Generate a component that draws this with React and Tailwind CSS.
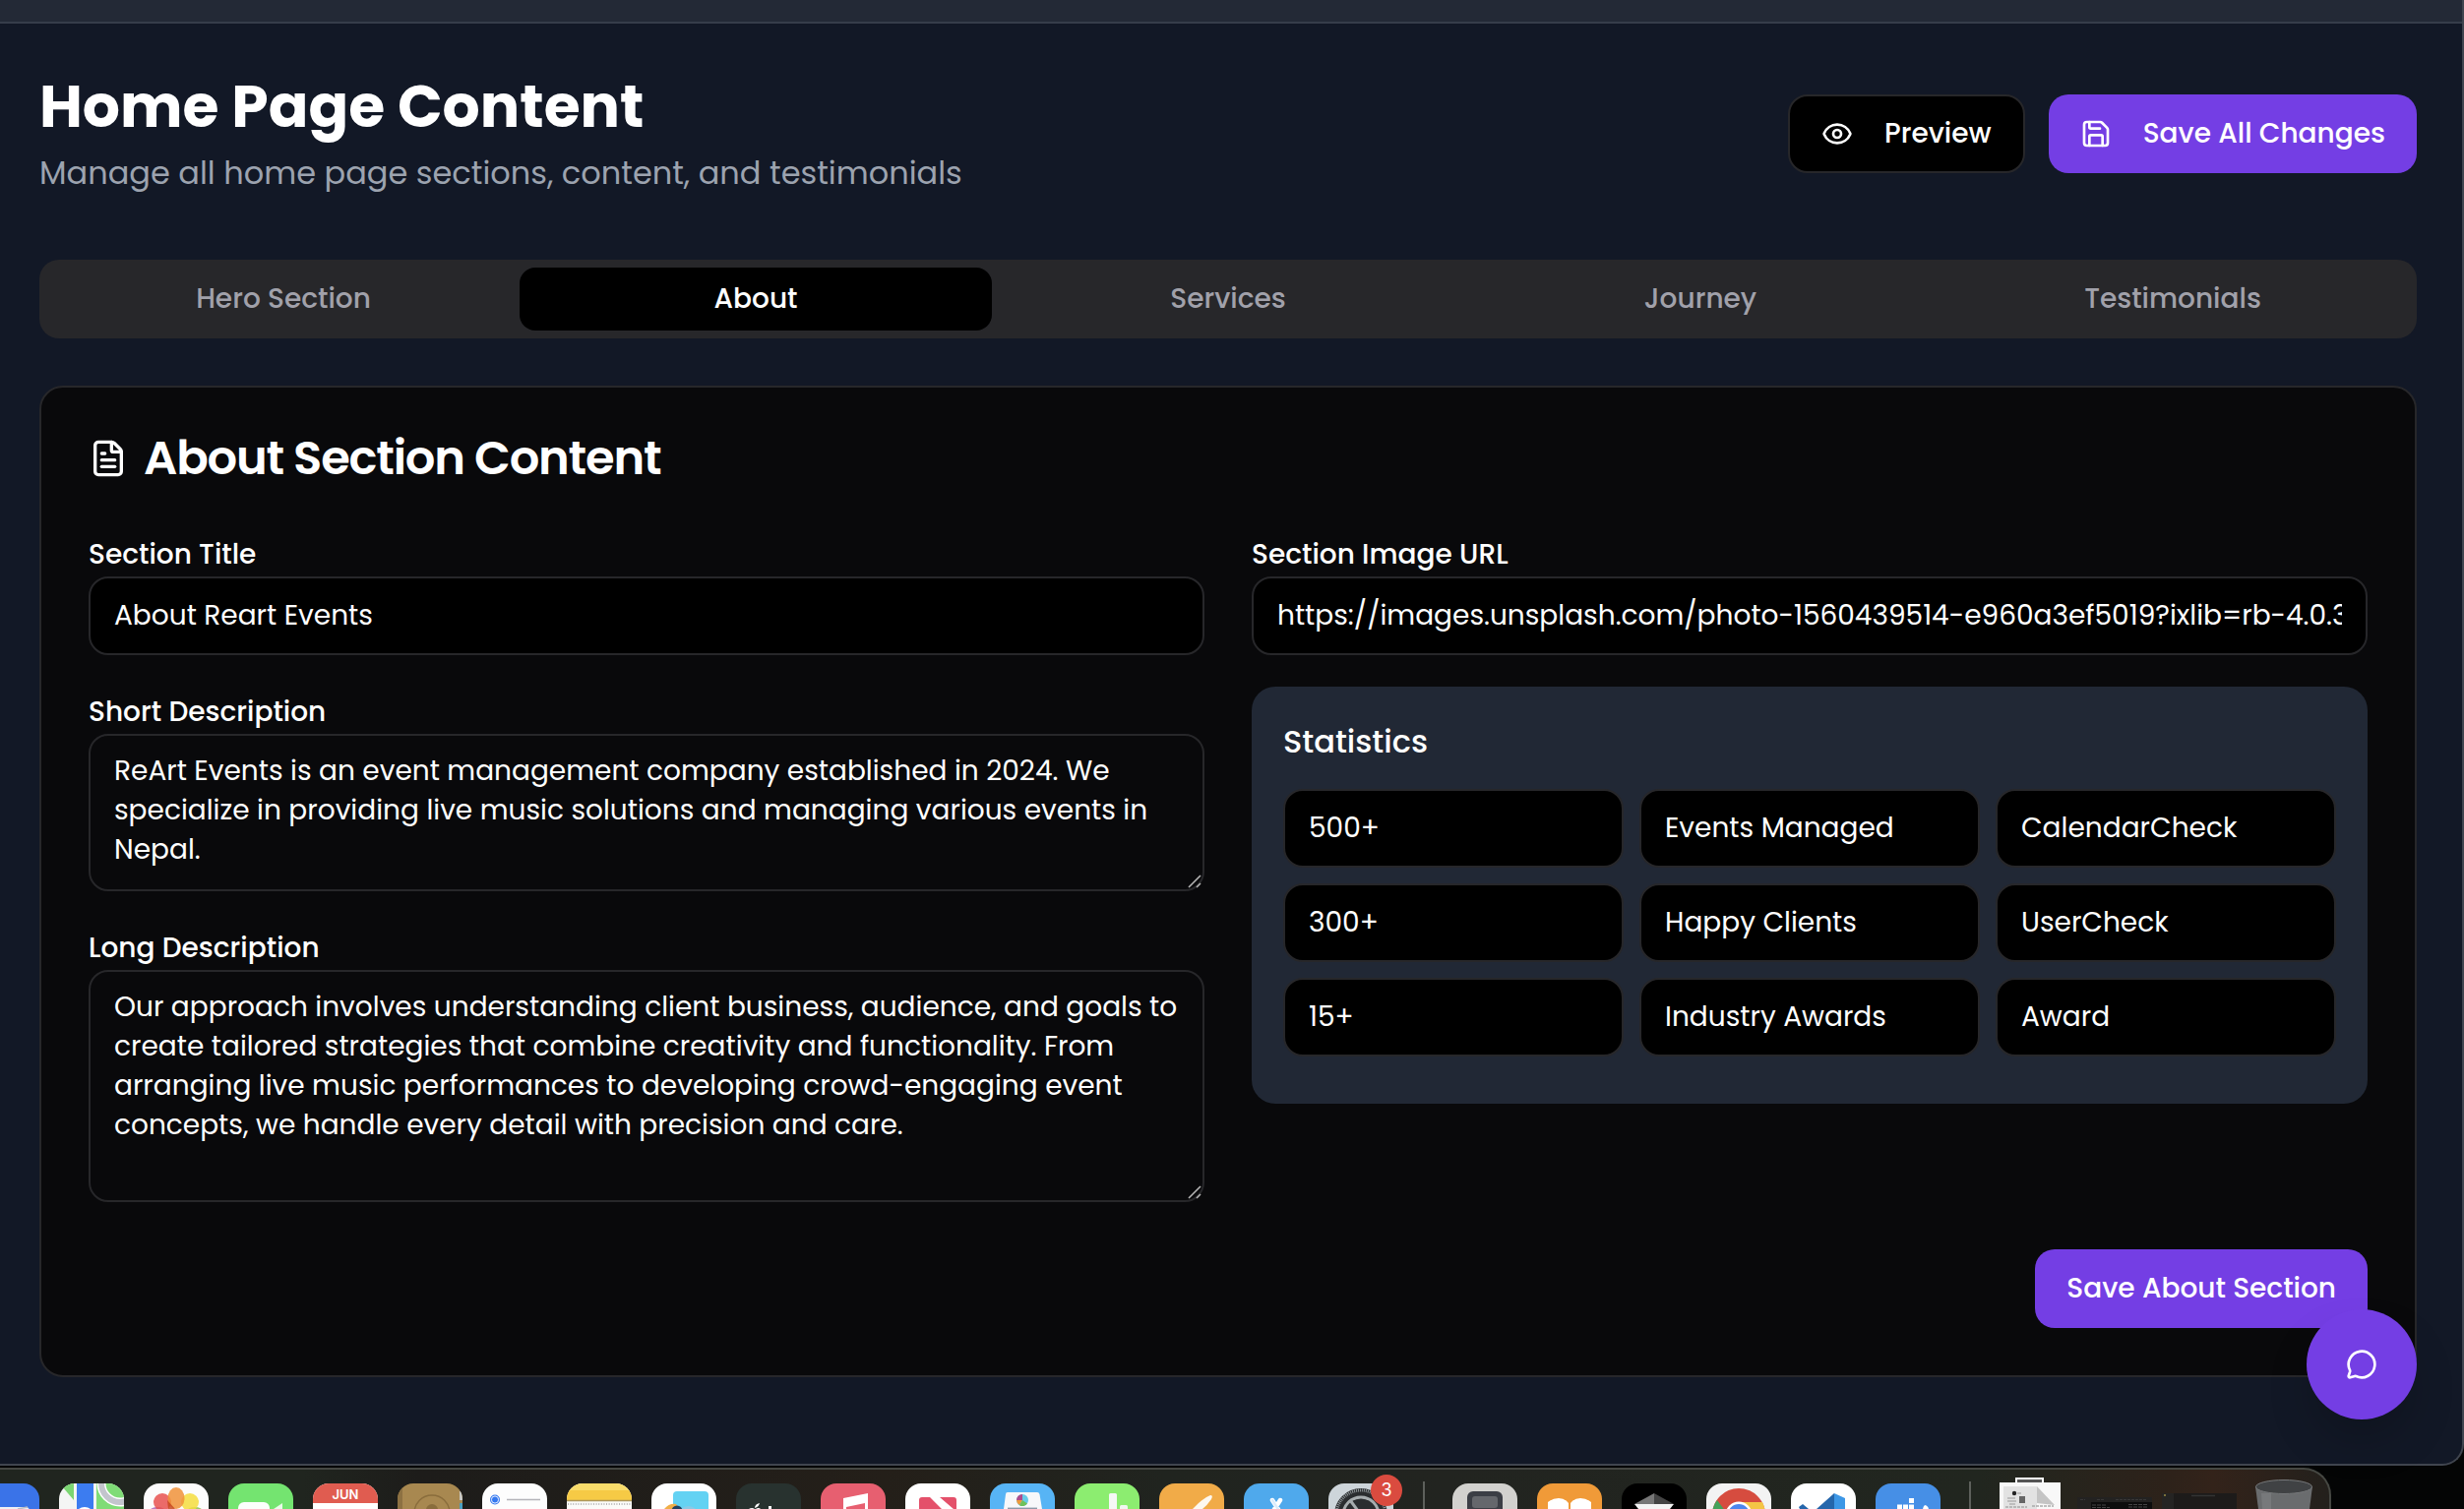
import { Eye, FileText, MessageCircle, Save } from "lucide-react";

const tabs = ["Hero Section", "About", "Services", "Journey", "Testimonials"];

const stats = [
  ["500+", "Events Managed", "CalendarCheck"],
  ["300+", "Happy Clients", "UserCheck"],
  ["15+", "Industry Awards", "Award"],
];

function Field({ label, children }) {
  return (
    <div>
      <div className="h-[48px] text-[28px] leading-[52px] font-medium">{label}</div>
      {children}
    </div>
  );
}

function TextInput({ children }) {
  return (
    <div className="flex h-20 items-center rounded-[20px] border-2 border-[#27272a] bg-black px-6 text-[28px] leading-[40px]">
      <span className="min-w-0 flex-1 overflow-hidden whitespace-nowrap">{children}</span>
    </div>
  );
}

function TextArea({ children, size }) {
  return (
    <div className={`relative rounded-[20px] border-2 border-[#27272a] px-6 py-4 text-[28px] leading-[40px] ${size}`}>
      {children}
      <svg className="absolute right-0 bottom-0 size-4" viewBox="0 0 16 16" stroke="#b4b4b4" strokeWidth="1.6">
        <path d="M2 14 14 2M10 14l4-4" />
      </svg>
    </div>
  );
}

function Header() {
  return (
    <header className="flex items-center justify-between">
      <div>
        <h1 className="text-[60px] leading-[72px] font-bold">Home Page Content</h1>
        <p className="mt-2 text-[32px] leading-[48px] text-[#9ca3af]">
          Manage all home page sections, content, and testimonials
        </p>
      </div>
      <div className="flex gap-6">
        <button className="flex h-20 items-center gap-8 rounded-[20px] border-2 border-[#27272a] bg-black px-8 text-[28px] font-medium">
          <Eye size={32} />
          Preview
        </button>
        <button className="flex h-20 items-center gap-8 rounded-[20px] bg-[#743ee4] px-8 text-[28px] font-medium">
          <Save size={32} />
          Save All Changes
        </button>
      </div>
    </header>
  );
}

function Tabs() {
  return (
    <nav className="mt-16 grid h-20 grid-cols-5 rounded-[20px] bg-[#27272a] p-2 text-[28px] font-medium text-[#a1a1aa]">
      {tabs.map((t) => (
        <div
          key={t}
          className={`flex items-center justify-center rounded-2xl ${t === "About" ? "bg-black text-white" : ""}`}
        >
          {t}
        </div>
      ))}
    </nav>
  );
}

function AboutCard() {
  return (
    <section className="mt-12 rounded-3xl border-2 border-[#27272a] bg-[#09090b] p-12">
      <h2 className="flex h-12 items-center gap-4 text-[48px] leading-[48px] font-semibold tracking-tight">
        <FileText size={40} />
        About Section Content
      </h2>
      <div className="mt-12 grid grid-cols-2 gap-12">
        <div className="flex flex-col gap-8">
          <Field label="Section Title">
            <TextInput>About Reart Events</TextInput>
          </Field>
          <Field label="Short Description">
            <TextArea size="h-[160px]">
              ReArt Events is an event management company established in 2024. We specialize in providing live music
              solutions and managing various events in Nepal.
            </TextArea>
          </Field>
          <Field label="Long Description">
            <TextArea size="h-[236px]">
              Our approach involves understanding client business, audience, and goals to create tailored strategies
              that combine creativity and functionality. From arranging live music performances to developing
              crowd-engaging event concepts, we handle every detail with precision and care.
            </TextArea>
          </Field>
        </div>
        <div className="flex flex-col gap-8">
          <Field label="Section Image URL">
            <TextInput>https://images.unsplash.com/photo-1560439514-e960a3ef5019?ixlib=rb-4.0.3</TextInput>
          </Field>
          <div className="rounded-3xl bg-[#212835] p-8 pb-12">
            <h3 className="text-[32px] leading-[48px] font-medium">Statistics</h3>
            <div className="mt-6 grid grid-cols-3 gap-4">
              {stats.flat().map((s) => (
                <TextInput key={s}>{s}</TextInput>
              ))}
            </div>
          </div>
        </div>
      </div>
      <div className="mt-12 flex justify-end">
        <button className="h-20 rounded-[20px] bg-[#743ee4] px-8 text-[28px] font-medium">Save About Section</button>
      </div>
    </section>
  );
}

function DockIcon({ bg, children }) {
  return (
    <div className={`h-[26px] w-[66px] shrink-0 overflow-hidden rounded-t-2xl ${bg}`}>
      <svg width="66" height="26" viewBox="0 0 66 26">
        {children}
      </svg>
    </div>
  );
}

function Dock() {
  return (
    <div className="mt-[2px] h-[42px] w-[2369px] overflow-hidden rounded-tr-[28px] border-t-2 border-r-2 border-[#454742] bg-[linear-gradient(90deg,#20251f_0%,#20251f_13%,#1d1c1a_18%,#241f19_38%,#20241f_50%,#222420_62%,#21261f_85%,#2d221a_93%,#33231a_95%,#23201c_100%)]">
      <div className="-ml-[26px] flex h-10 items-end gap-5">
        <DockIcon bg="bg-[#3a73e8]">
          <path d="M0 24h52q4 0 4 4H0z" fill="#eef0f4" />
          <path d="M44 26 54 24" stroke="#b9bcc6" strokeWidth="1.5" />
        </DockIcon>
        <DockIcon bg="bg-[#f4f5f4]">
          <path d="M3 3 15 17V0H5z" fill="#7bd672" />
          <path d="M18 0h17v26H18z" fill="#3c7cf0" />
          <path d="M38 0h28v26H38z" fill="#7fdc76" />
          <circle cx="62" cy="0" r="19" fill="none" stroke="#fff" strokeWidth="9" />
          <circle cx="62" cy="0" r="19" fill="none" stroke="#c3c5cd" strokeWidth="6" />
          <circle cx="26" cy="34" r="10" fill="#fff" />
        </DockIcon>
        <DockIcon bg="bg-[#fcfcfc]">
          <g fillOpacity="0.85">
            <ellipse cx="14" cy="28" rx="8" ry="4" fill="#b065b5" />
            <ellipse cx="52" cy="28" rx="8" ry="4" fill="#8fc04c" />
            <ellipse cx="47" cy="19" rx="9" ry="9" fill="#f4dd3e" />
            <ellipse cx="19" cy="19" rx="9" ry="9" fill="#e8514f" />
            <ellipse cx="33" cy="15" rx="8.5" ry="11" fill="#f0923a" />
            <path d="m24 17 8 9h-7z" fill="#c8481f" />
          </g>
        </DockIcon>
        <DockIcon bg="bg-[#74e470]">
          <rect x="10" y="19" width="32" height="20" rx="6" fill="#fbfffb" />
          <path d="m46 26 9-6v8z" fill="#eafbe9" />
        </DockIcon>
        <DockIcon bg="bg-white">
          <path d="M0 0h66v20H0z" fill="#e05c50" />
          <text x="33" y="16" textAnchor="middle" fontFamily="Inter, sans-serif" fontWeight="600" fontSize="13" fill="#fff">
            JUN
          </text>
        </DockIcon>
        <DockIcon bg="bg-[#a88850]">
          <path d="M0 0h5v26H0z" fill="#8d7142" />
          <circle cx="35" cy="30" r="18" fill="none" stroke="#8a6d3c" strokeWidth="1.5" />
          <circle cx="35" cy="27" r="6" fill="#8a6d3c" />
          <path d="M63 8h3v9h-3z" fill="#c8c8c4" />
          <path d="M63 20h3v6h-3z" fill="#4b9fc0" />
        </DockIcon>
        <DockIcon bg="bg-[#fdfdfd]">
          <circle cx="13" cy="16.500" r="5" fill="#3478f0" />
          <circle cx="13" cy="16.500" r="3.600" fill="none" stroke="#fff" strokeWidth="0.900" />
          <path d="M25 16.500h34" stroke="#b5b5ba" strokeWidth="1.500" />
        </DockIcon>
        <DockIcon bg="bg-[#fbfbf9]">
          <path d="M0 0h66v8H0z" fill="#f9dc6a" />
          <path d="M0 7h66v10H0z" fill="#f6ca45" />
          <path d="M0 17.500h66" stroke="#ad985c" strokeWidth="1.500" />
          <path d="M1 21h64" stroke="#b8b8b8" strokeWidth="2" strokeDasharray="1 1.600" />
        </DockIcon>
        <DockIcon bg="bg-white">
          <rect x="22" y="8" width="36" height="26" rx="4" fill="#63d2f3" />
          <path d="M13 26q5-6 12-5l4 5z" fill="#f0ae48" />
          <path d="M30 26q8-6 15 0z" fill="#8ac9e6" />
          <circle cx="26" cy="28" r="5.500" fill="#22405f" />
        </DockIcon>
        <DockIcon bg="bg-[#28322f]">
          <path d="M19 25q0-4 5-5-1 4-5 5z" fill="#fff" />
          <path d="M13 26q3-2 6 0zM20 26q3-2 5 0zM33 23h3v3h-3z" fill="#fff" />
        </DockIcon>
        <DockIcon bg="bg-[#e75f70]">
          <path d="M23 15 48 10v16h-3v-6l-19 4v2h-3z" fill="#fff" />
        </DockIcon>
        <DockIcon bg="bg-white">
          <path d="M14 17q0-3 3-3h8l12 12H14zM35 14h14q3 0 3 3v9h-3z" fill="#e4506a" />
        </DockIcon>
        <DockIcon bg="bg-[#57b4f5]">
          <path d="M18 9h30q2 0 2.500 2L53 26H14l2-15q0-2 2-2z" fill="#f7f8fa" />
          <circle cx="33" cy="17" r="6" fill="#67cbe8" />
          <path d="M33 17v-6a6 6 0 0 0-6 6z" fill="#b04a8c" />
          <path d="M33 17h-6a6 6 0 0 0 3 5z" fill="#ef9a3a" />
          <path d="m33 17-3 5.200a6 6 0 0 0 8-1.800z" fill="#6fc158" />
          <path d="M18 25.300h30" stroke="#8d9aa8" strokeWidth="1.400" />
        </DockIcon>
        <DockIcon bg="bg-[#8ced70]">
          <rect x="35" y="10" width="8" height="20" rx="1.500" fill="#f5f8f5" />
          <rect x="46" y="22" width="8" height="10" rx="1.500" fill="#f0f6f0" />
        </DockIcon>
        <DockIcon bg="bg-[#f1ab48]">
          <path d="M34 26Q44 15 52 12q3 0 1 4-4 6-9 10z" fill="#fdf8f0" />
        </DockIcon>
        <DockIcon bg="bg-[#4fa9ec]">
          <path d="m29 17 9 14M37 17l-9 14" stroke="#fff" strokeWidth="4.500" strokeLinecap="round" />
          <path d="m29 17 9 14" stroke="#dcecfb" strokeWidth="2.500" strokeLinecap="round" />
        </DockIcon>
        <div className="relative h-[26px] w-[66px]">
          <DockIcon bg="bg-[#cdd5da]">
            <circle cx="33" cy="32" r="27" fill="#2a2d2f" />
            <circle cx="33" cy="32" r="25" fill="none" stroke="#8f9699" strokeWidth="3" strokeDasharray="1 1" />
            <circle cx="33" cy="32" r="18" fill="none" stroke="#a6acae" strokeWidth="3" />
            <path d="m22 17 11 15" stroke="#a6acae" strokeWidth="3" />
          </DockIcon>
          <div className="absolute -top-[9px] left-[43px] flex size-8 items-center justify-center rounded-full bg-[#da4b3f] font-[Inter,sans-serif] text-[18px] leading-none text-white">
            3
          </div>
        </div>
        <div className="-mr-[7px] ml-[10px] h-7 w-[2px] bg-[#5d605b]" />
        <div className="w-[1px] -ml-[6px]" />
        <DockIcon bg="bg-[#d2d1ce]">
          <rect x="15" y="8" width="36" height="26" rx="6" fill="#3b3e45" />
          <rect x="20" y="13" width="26" height="12" rx="3" fill="#65676c" />
        </DockIcon>
        <DockIcon bg="bg-[#f09a38]">
          <path d="M11 26v-7q5-4 11-4t10 5v6zM34 26v-6q4-5 10-5t11 4v7z" fill="#fff" />
        </DockIcon>
        <DockIcon bg="bg-black">
          <path d="M33 10 13 21l20 5z" fill="#777" />
          <path d="m33 10 20 11-20 5z" fill="#444" />
          <path d="M13 21h40l-4 5H17z" fill="#f4f4f4" />
        </DockIcon>
        <DockIcon bg="bg-[#f3f3f3]">
          <circle cx="33" cy="32" r="27" fill="#d64c3f" />
          <path d="m11 17 9 12-14 3q0-9 5-15z" fill="#43a25a" />
          <path d="M33 19h24q3 6 3 13H33z" fill="#f4c545" />
          <circle cx="33" cy="32" r="13.500" fill="#fff" />
          <circle cx="33" cy="32" r="11" fill="#4c86ee" />
        </DockIcon>
        <DockIcon bg="bg-white">
          <path d="M44 10v16H26z" fill="#2566ab" />
          <path d="M44 10 55 15v11H44z" fill="#3d97e6" />
          <path d="m8 24 4-3 6 5H9z" fill="#2566ab" />
        </DockIcon>
        <DockIcon bg="bg-[#468fe6]">
          <path d="M34 15h5v5h-5zM22 21.500h5v5h-5zM28 21.500h5v5h-5zM34 21.500h5v5h-5zM50 22q4 1 4 5h-6q0-3 2-5z" fill="#fff" />
        </DockIcon>
        <div className="ml-[9px] h-7 w-[2px] bg-[#5d605b]" />
        <svg width="62" height="34" viewBox="0 0 62 34" className="ml-[9px] shrink-0">
          <path d="M17 3h27v8H17z" fill="#555" stroke="#fff" strokeWidth="2" />
          <path d="M0 7h62v27H0z" fill="#f8f8f8" />
          <path d="M4 11h34v23H4z" fill="#e2e2e2" />
          <path d="m38 11 18 19-18-2z" fill="#c4c4c4" />
          <circle cx="15" cy="18" r="2.200" fill="#222" />
          <path d="M18 18h4M8 23h8M8 26h9M10 29h6" stroke="#999" strokeWidth="1" />
          <path d="M20 21h6v7h-6z" fill="#666" />
          <path d="M6 32h22M33 31h22" stroke="#aaa" strokeWidth="1.500" strokeDasharray="3 1" />
        </svg>
        <svg width="76" height="12" viewBox="0 0 76 12" className="-ml-[3px] shrink-0">
          <path d="M0 0h76v12H0z" fill="#232221" />
          <path d="M14 5h62v7H14z" fill="#0d0d0d" />
          <path d="M3 2.500h5M20 2.500h8M39 2.500h32" stroke="#383838" strokeWidth="1.200" strokeDasharray="3 1" />
          <path d="M15 8h14M15 10.500h18M52 7.500h20M52 10h20" stroke="#5c5c5c" strokeWidth="0.700" strokeDasharray="4 1" />
        </svg>
        <svg width="76" height="16" viewBox="0 0 76 16" className="-ml-[10px] shrink-0">
          <path d="M0 0h76v16H0z" fill="#1d1b1a" />
          <path d="M0 0h12v16H0z" fill="#252423" />
          <path d="M30 2.500h24" stroke="#333" strokeWidth="1.500" />
          <path d="M2 2h2" stroke="#7a6f3a" strokeWidth="2" />
        </svg>
        <svg width="58" height="30" viewBox="0 0 58 30" className="-ml-[1px] shrink-0">
          <path d="M0 7h58l-3 23H3z" fill="#6a6c6e" />
          <path d="M6 14h10v16H7z" fill="#77797b" />
          <ellipse cx="29" cy="7.500" rx="28.500" ry="7" fill="#404244" stroke="#77797b" strokeWidth="1" />
        </svg>
      </div>
    </div>
  );
}

export default function App() {
  return (
    <div className="h-[1534px] w-[2504px] overflow-hidden bg-[#040505] font-[Poppins,Inter,sans-serif] text-white">
      <div className="relative flex h-[1490px] w-[2504px] flex-col rounded-br-[22px] border-r-2 border-b-2 border-[#40454f] bg-[#121826]">
        <div className="h-6 shrink-0 border-b-2 border-[#363d4a] bg-[#232936]" />
        <main className="pt-12 pr-[46px] pl-10">
          <Header />
          <Tabs />
          <AboutCard />
        </main>
        <button className="absolute right-[46px] bottom-[45px] flex size-28 items-center justify-center rounded-full bg-[#743ee4] shadow-2xl">
          <MessageCircle size={32} />
        </button>
      </div>
      <Dock />
    </div>
  );
}
